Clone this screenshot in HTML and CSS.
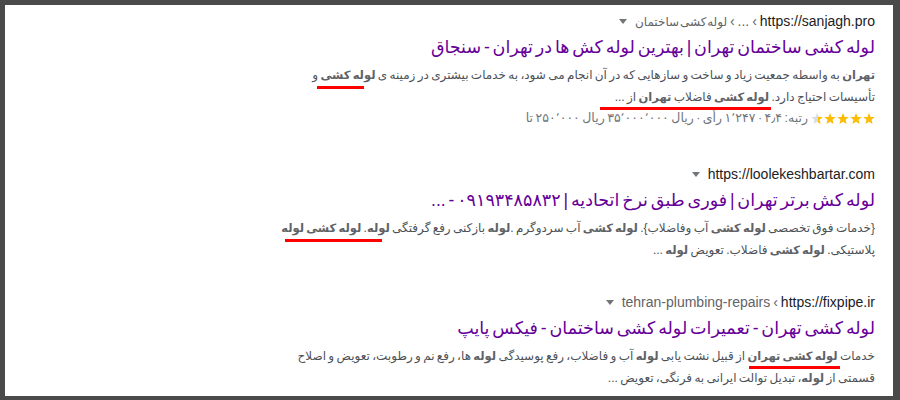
FILE: index.html
```html
<!DOCTYPE html>
<html lang="fa">
<head>
<meta charset="utf-8">
<title>نتایج جستجو</title>
<link rel="stylesheet" href="styles.css">
</head>
<body>
<div class="page">
  <div class="frame">
    <div class="results" dir="rtl">
      <div class="result r1">
        <div class="url"><span class="host">https://sanjagh.pro</span><span class="crumb">› ... › <span class="ar">لوله کشی ساختمان</span></span><span class="tri"></span></div>
        <div class="title">لوله کشی ساختمان تهران | بهترین لوله کش ها در تهران - سنجاق</div>
        <div class="snippet"><b>تهران</b> به واسطه جمعیت زیاد و ساخت و سازهایی که در آن انجام می شود، به خدمات بیشتری در زمینه ی <b>لوله کشی</b> و<br>تأسیسات احتیاج دارد. <b>لوله کشی</b> فاضلاب <b>تهران</b> از ...</div>
        <div class="rating">
          <svg class="stars" width="64" height="13" viewBox="0 0 64 13" aria-hidden="true">
            <defs>
              <linearGradient id="partial" x1="0" y1="0" x2="1" y2="0">
                <stop offset="0.6" stop-color="#dadce0"/>
                <stop offset="0.6" stop-color="#fbbc04"/>
              </linearGradient>
              <polygon id="star" points="6,0.4 7.6,4.4 11.8,4.6 8.5,7.3 9.6,11.6 6,9.2 2.4,11.6 3.5,7.3 0.2,4.6 4.4,4.4"/>
            </defs>
            <use href="#star" x="0" y="0.5" fill="url(#partial)"/>
            <use href="#star" x="13" y="0.5" fill="#fbbc04"/>
            <use href="#star" x="26" y="0.5" fill="#fbbc04"/>
            <use href="#star" x="39" y="0.5" fill="#fbbc04"/>
            <use href="#star" x="52" y="0.5" fill="#fbbc04"/>
          </svg>
          <span class="rtext">رتبه: ۴٫۴ · ۱٬۲۴۷ رأی · ریال ۳۵٬۰۰۰٬۰۰۰ ریال ۲۵۰٬۰۰۰ تا</span>
        </div>
      </div>
      <div class="result r2">
        <div class="url"><span class="host">https://loolekeshbartar.com</span><span class="tri"></span></div>
        <div class="title">لوله کش برتر تهران | فوری طبق نرخ اتحادیه | ۰۹۱۹۳۴۸۵۸۳۲ - ...</div>
        <div class="snippet">{خدمات فوق تخصصی <b>لوله کشی</b> آب وفاضلاب}. <b>لوله کشی</b> آب سردوگرم .<b>لوله</b> بازکنی رفع گرفتگی <b>لوله</b>. <b>لوله کشی لوله</b><br>پلاستیکی. <b>لوله کشی</b> فاضلاب. تعویض <b>لوله</b> ...</div>
      </div>
      <div class="result r3">
        <div class="url"><span class="host">https://fixpipe.ir</span><span class="crumb">› tehran-plumbing-repairs</span><span class="tri"></span></div>
        <div class="title">لوله کشی تهران - تعمیرات لوله کشی ساختمان - فیکس پایپ</div>
        <div class="snippet">خدمات <b>لوله کشی تهران</b> از قبیل نشت یابی <b>لوله</b> آب و فاضلاب، رفع پوسیدگی <b>لوله</b> ها، رفع نم و رطوبت، تعویض و اصلاح<br>قسمتی از <b>لوله</b>، تبدیل توالت ایرانی به فرنگی، تعویض ...</div>
      </div>
    </div>
  </div>
  <span class="mark m1"></span>
  <span class="mark m2"></span>
  <span class="mark m3"></span>
  <span class="mark m4"></span>
</div>
</body>
</html>
```
FILE: styles.css
```css
html, body {
  margin: 0;
  padding: 0;
  background: #4a4a4a;
}
.page {
  position: relative;
  width: 900px;
  height: 400px;
  overflow: hidden;
  font-family: "Liberation Sans", "DejaVu Sans", sans-serif;
}
.frame {
  box-sizing: border-box;
  width: 900px;
  height: 400px;
  border-style: solid;
  border-color: #4a4a4a;
  border-width: 5px 7px 4px 5px;
  background: #ffffff;
  padding: 6px 18px 0 0;
}
.results {
  display: flex;
  flex-direction: column;
}
.result {
  display: flex;
  flex-direction: column;
  margin-bottom: 31px;
}
.r1 {
  margin-bottom: 35px;
}
.url {
  display: flex;
  flex-direction: row;
  align-items: center;
  gap: 3px;
  height: 20px;
  font-size: 14px;
  line-height: 20px;
  white-space: nowrap;
}
.host {
  color: #202124;
}
.crumb {
  color: #5f6368;
  word-spacing: -1px;
}
.ar {
  font-size: 12px;
  word-spacing: -2.5px;
}
.tri {
  width: 0;
  height: 0;
  margin-right: 5px;
  border-left: 4px solid transparent;
  border-right: 4px solid transparent;
  border-top: 5px solid #70757a;
}
.title {
  margin-top: 3px;
  font-size: 17.5px;
  word-spacing: -2px;
  line-height: 27px;
  color: #660099;
  white-space: nowrap;
}
.snippet {
  margin-top: 3px;
  font-size: 12px;
  word-spacing: -1px;
  line-height: 22px;
  color: #4d5156;
  white-space: nowrap;
}
.snippet b {
  color: #5f6368;
  font-weight: bold;
  font-size: 11.5px;
}
.rating {
  display: flex;
  flex-direction: row;
  align-items: center;
  gap: 3px;
  height: 21px;
  font-size: 12.5px;
  word-spacing: -1px;
  line-height: 21px;
  color: #70757a;
  white-space: nowrap;
}
.stars {
  display: block;
  flex: none;
}
.mark {
  position: absolute;
  height: 3px;
  background: #ff0000;
}
.m1 { left: 317px; top: 86px; width: 47px; }
.m2 { left: 600px; top: 107px; width: 171px; }
.m3 { left: 285px; top: 239px; width: 97px; }
.m4 { left: 749px; top: 366px; width: 91px; }
```
